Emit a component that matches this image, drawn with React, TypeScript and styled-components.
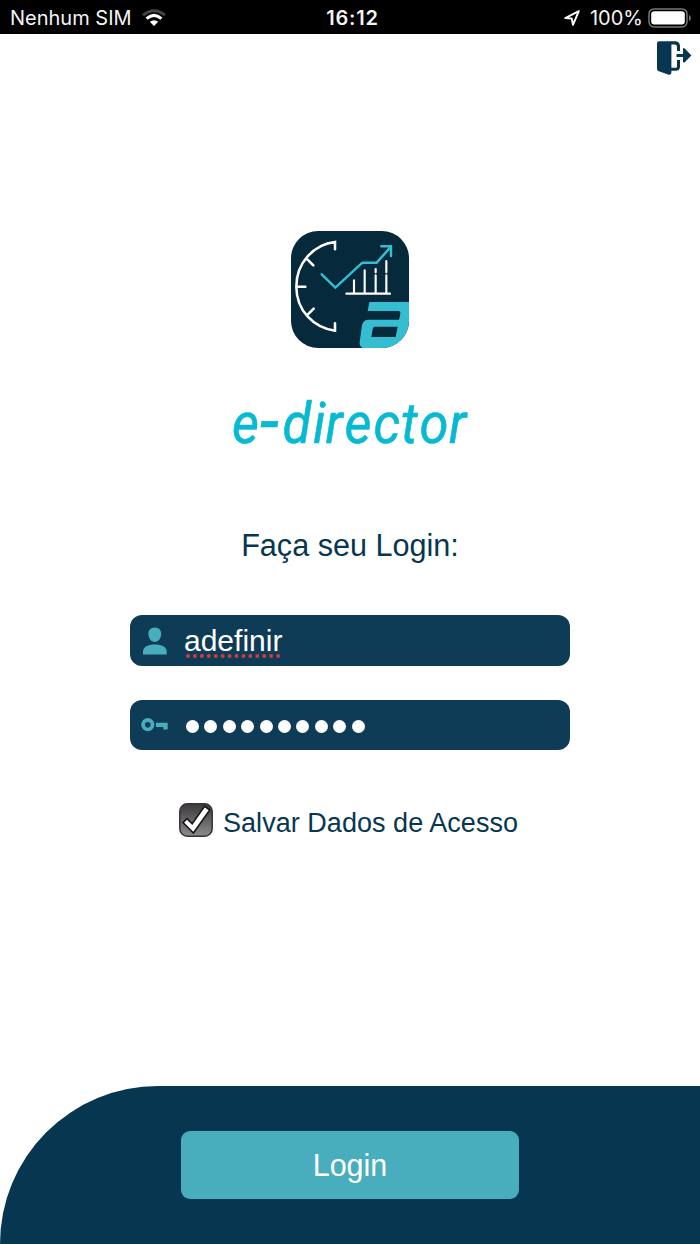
import React, { useState } from 'react';
import styled, { createGlobalStyle } from 'styled-components';

const navy = '#073750';
const teal = '#48aebe';

const GlobalStyle = createGlobalStyle`
  * { box-sizing: border-box; }
  body { margin: 0; background: #fff; font-family: "Liberation Sans", Arial, sans-serif; }
`;

const Screen = styled.div`
  display: flex;
  flex-direction: column;
  width: 700px;
  height: 1244px;
  overflow: hidden;
  background: #fff;
`;

const StatusBar = styled.header`
  display: grid;
  grid-template-columns: 1fr auto 1fr;
  align-items: center;
  height: 34px;
  padding: 2px 9px 0 10px;
  background: #000;
  color: #f4f4f4;
  font: 400 20px/24px Inter, sans-serif;
`;

const StatusGroup = styled.div<{ $end?: boolean }>`
  display: flex;
  align-items: center;
  justify-content: ${(p) => (p.$end ? 'flex-end' : 'flex-start')};
`;

const Carrier = styled.span`
  letter-spacing: 0;
  margin-right: 10px;
`;

const Clock = styled.span`
  font-weight: 600;
  letter-spacing: 0.8px;
  padding-left: 4px;
`;

const BatteryText = styled.span`
  margin: 0 5px 0 10px;
`;

const TopActions = styled.div`
  display: flex;
  justify-content: flex-end;
  padding: 7px 8px 0 0;
  height: 197px;
`;

const IconButton = styled.button`
  padding: 0;
  border: 0;
  background: none;
  width: 36px;
  height: 36px;
`;

const Main = styled.main`
  display: flex;
  flex: 1;
  flex-direction: column;
  align-items: center;
`;

const Brand = styled.div`
  display: flex;
  flex-direction: column;
  align-items: center;
  gap: 24px;
  height: 296px;
  svg { display: block; }
`;

const Title = styled.h1`
  margin: 0 0 52px;
  height: 36px;
  color: ${navy};
  font-size: 30.6px;
  font-weight: 400;
  line-height: 36px;
`;

const Field = styled.div`
  display: flex;
  align-items: center;
  width: 440px;
  height: 50.5px;
  margin-bottom: 34px;
  padding: 1px 0 0 10px;
  border-radius: 12px;
  background: #0e3c56;
  svg { display: block; margin-right: 14px; }
`;

const FieldText = styled.span`
  color: #fff;
  font-size: 30px;
  line-height: 34px;
`;

const Misspelled = styled.span`
  display: flex;
  flex-direction: column;
  height: 43px;
  padding-top: 4.5px;
  svg { margin: -4px 0 0 2px; }
`;

const Dots = styled.span`
  display: flex;
  gap: 5.4px;
  padding: 2px 0 0 2px;
`;

const Dot = styled.i`
  width: 13px;
  height: 13px;
  border-radius: 50%;
  background: #fff;
`;

const SaveRow = styled.label`
  display: flex;
  align-items: center;
  gap: 10px;
  width: 342px;
  height: 36px;
  margin-top: 18px;
  color: ${navy};
  font-size: 27px;
  line-height: 36px;
  white-space: nowrap;
`;

const SaveText = styled.span`
  padding-top: 5px;
  letter-spacing: 0.04px;
`;

const CheckBox = styled.button`
  flex: none;
  width: 34px;
  height: 34px;
  padding: 0;
  border: 0;
  background: none;
  svg { display: block; }
`;

const Footer = styled.footer`
  display: flex;
  justify-content: center;
  align-items: flex-start;
  height: 158px;
  padding-top: 45px;
  border-top-left-radius: 158px;
  background: ${navy};
`;

const LoginButton = styled.button`
  width: 338px;
  height: 68px;
  padding: 0;
  border: 0;
  border-radius: 9px;
  background: ${teal};
  color: #fff;
  font: 400 30.5px/67px "Liberation Sans", Arial, sans-serif;
`;

const WifiIcon = () => (
  <svg width="24" height="18" viewBox="0 0 24 18" fill="none">
    <path d="M1 6.2Q12-2.7 23 6.2" stroke="#444" strokeWidth="3" />
    <path d="M4.6 9.6Q12 3.3 19.4 9.6" stroke="#fff" strokeWidth="3.2" />
    <path d="M7.8 12.8Q12 9.6 16.2 12.8L12 17Z" fill="#fff" />
  </svg>
);

const LocationIcon = () => (
  <svg width="16" height="16" viewBox="0 0 16 16" fill="none" stroke="#fff" strokeWidth="1.9" strokeLinejoin="round">
    <path d="M14.8 1.2 1.2 8.1 7.7 8.5 9 14.8Z" />
  </svg>
);

const BatteryIcon = () => (
  <svg width="43" height="20" viewBox="0 0 43 20">
    <rect x="1" y=".9" width="38" height="18" rx="5" fill="none" stroke="#777" strokeWidth="1.5" />
    <rect x="3.2" y="3.2" width="33.6" height="13.4" rx="3" fill="#fff" />
    <path d="M41 7c2.4 1 2.4 5 0 6Z" fill="#777" />
  </svg>
);

const ExitIcon = () => (
  <svg width="36" height="36" viewBox="0 0 36 36">
    <path d="M3 .2H19C22 .2 24 2 24 5V10H21V6Q21 3.4 18.5 3.4H15.4V31.5Q15 34.6 12 33.6L2.2 30Q1 29.3 1 27.5V2.2Q1 .2 3 .2Z" fill={navy} />
    <path d="M14 28.3H19.8Q22.5 28.3 22.5 25.6V19" fill="none" stroke={navy} strokeWidth="3" />
    <path d="M20.5 12.9H27V7.7Q27.6 6.5 29 7.8L35.4 14.5 29 20.9Q27.6 22.2 27 21V16H20.5Z" fill={navy} />
  </svg>
);

const AppLogo = () => (
  <svg width="118" height="117" viewBox="33 33 354 351" fill="none">
    <defs>
      <clipPath id="tile"><rect x="33" y="33" width="354" height="351" rx="82" /></clipPath>
    </defs>
    <g clipPath="url(#tile)">
      <rect x="33" y="33" width="354" height="351" fill="#06293b" />
      <g stroke="#fff" strokeWidth="7.6" strokeLinecap="round">
        <path d="M165 88V66C102 73 49 128 49 200S102 324 165 332V310M82 118 100 136M50 200H76M83 284 101 266" />
        <path d="M199 221H330M222 181V220M254 151V220M287 147V157M287 166V220M319 123V157M319 166V220" strokeWidth="6.4" />
      </g>
      <path d="M125 163 166 203 247 128H290L332 81M304 79H333V108" stroke="#35bdd2" strokeWidth="7.4" strokeLinecap="round" />
      <path d="M268 246H390V386H256Q237 384 239 366L246 316Q249 299 266 299H357Q361 286 361 280Q362 273 355 273H263Z" fill="#35bdd2" />
      <path d="M284 320H353L347 351H274L278 328Q279 321 284 320Z" fill="#06293b" />
    </g>
  </svg>
);

// Left edge of each letter, before the horizontal condensing is applied.
const letterX = [7.6, 38, 62.5, 95.6, 109.2, 129.9, 161.4, 191.3, 211.4, 243.5];
const Wordmark = () => (
  <svg width="250" height="100" viewBox="0 0 250 100">
    <text
      transform="scale(.92 1)"
      y="71"
      fontFamily="Roboto, sans-serif"
      fontStyle="italic"
      fontWeight="400"
      fontSize="57"
      fill="#08b9d2"
      stroke="#08b9d2"
      strokeWidth=".6"
      strokeLinejoin="round"
    >
      <tspan x={letterX[0]}>e</tspan>
      <tspan x={letterX[1]} y="75.5" fontSize="76">-</tspan>
      <tspan x={letterX.slice(2).join(' ')} y="71">director</tspan>
    </text>
  </svg>
);

const UserIcon = () => (
  <svg width="30" height="30" viewBox="0 0 30 30" fill={teal}>
    <path d="M14.8 1.4C19 1.4 21.6 4.4 21.2 8.3 20.9 12.6 18.4 16 14.8 16S8.7 12.6 8.4 8.3C8 4.4 10.7 1.4 14.8 1.4Z" />
    <path d="M3 28.6V26C3 20.5 8 18.6 14.8 18.6S26.7 20.5 26.7 26V28.6Z" />
  </svg>
);

const KeyIcon = () => (
  <svg width="30" height="30" viewBox="0 0 30 30" fill={teal}>
    <circle cx="7.8" cy="14.7" r="4.7" fill="none" stroke={teal} strokeWidth="3.8" />
    <path d="M16 12.8H27.7V19.6H23.3V16.9H16Z" />
  </svg>
);

const SpellingMark = () => (
  <svg width="96" height="4" viewBox="0 0 96 4">
    <path d="M2 2H94" stroke="#ca3e43" strokeWidth="4" strokeLinecap="round" strokeDasharray="0 6.93" />
  </svg>
);

const CheckIcon = ({ checked }: { checked: boolean }) => (
  <svg width="34" height="34" viewBox="0 0 34 34">
    <defs>
      <linearGradient id="box" x1="0" y1="0" x2="0" y2="1">
        <stop stopColor="#3b393b" />
        <stop offset="1" stopColor="#8d8b8d" />
      </linearGradient>
    </defs>
    <rect x=".8" y=".8" width="32.4" height="32.4" rx="7.5" fill="url(#box)" stroke="#353335" strokeWidth="1.5" />
    {checked && (
      <path d="M4 19.6 8 15.6 13.2 20.8 25.6 3.4 30.8 7 14.4 30Z" fill="#fff" stroke="#151515" strokeWidth="1.6" />
    )}
  </svg>
);

export default function App() {
  const [saved, setSaved] = useState(true);
  return (
    <Screen>
      <GlobalStyle />
      <StatusBar>
        <StatusGroup>
          <Carrier>Nenhum SIM</Carrier>
          <WifiIcon />
        </StatusGroup>
        <Clock>16:12</Clock>
        <StatusGroup $end>
          <LocationIcon />
          <BatteryText>100%</BatteryText>
          <BatteryIcon />
        </StatusGroup>
      </StatusBar>
      <TopActions>
        <IconButton aria-label="Sair"><ExitIcon /></IconButton>
      </TopActions>
      <Main>
        <Brand>
          <AppLogo />
          <Wordmark />
        </Brand>
        <Title>Faça seu Login:</Title>
        <Field>
          <UserIcon />
          <Misspelled>
            <FieldText>adefinir</FieldText>
            <SpellingMark />
          </Misspelled>
        </Field>
        <Field>
          <KeyIcon />
          <Dots>
            {Array.from({ length: 10 }, (_, i) => <Dot key={i} />)}
          </Dots>
        </Field>
        <SaveRow>
          <CheckBox aria-label="Salvar" onClick={() => setSaved(!saved)}>
            <CheckIcon checked={saved} />
          </CheckBox>
          <SaveText>Salvar Dados de Acesso</SaveText>
        </SaveRow>
      </Main>
      <Footer>
        <LoginButton>Login</LoginButton>
      </Footer>
    </Screen>
  );
}
